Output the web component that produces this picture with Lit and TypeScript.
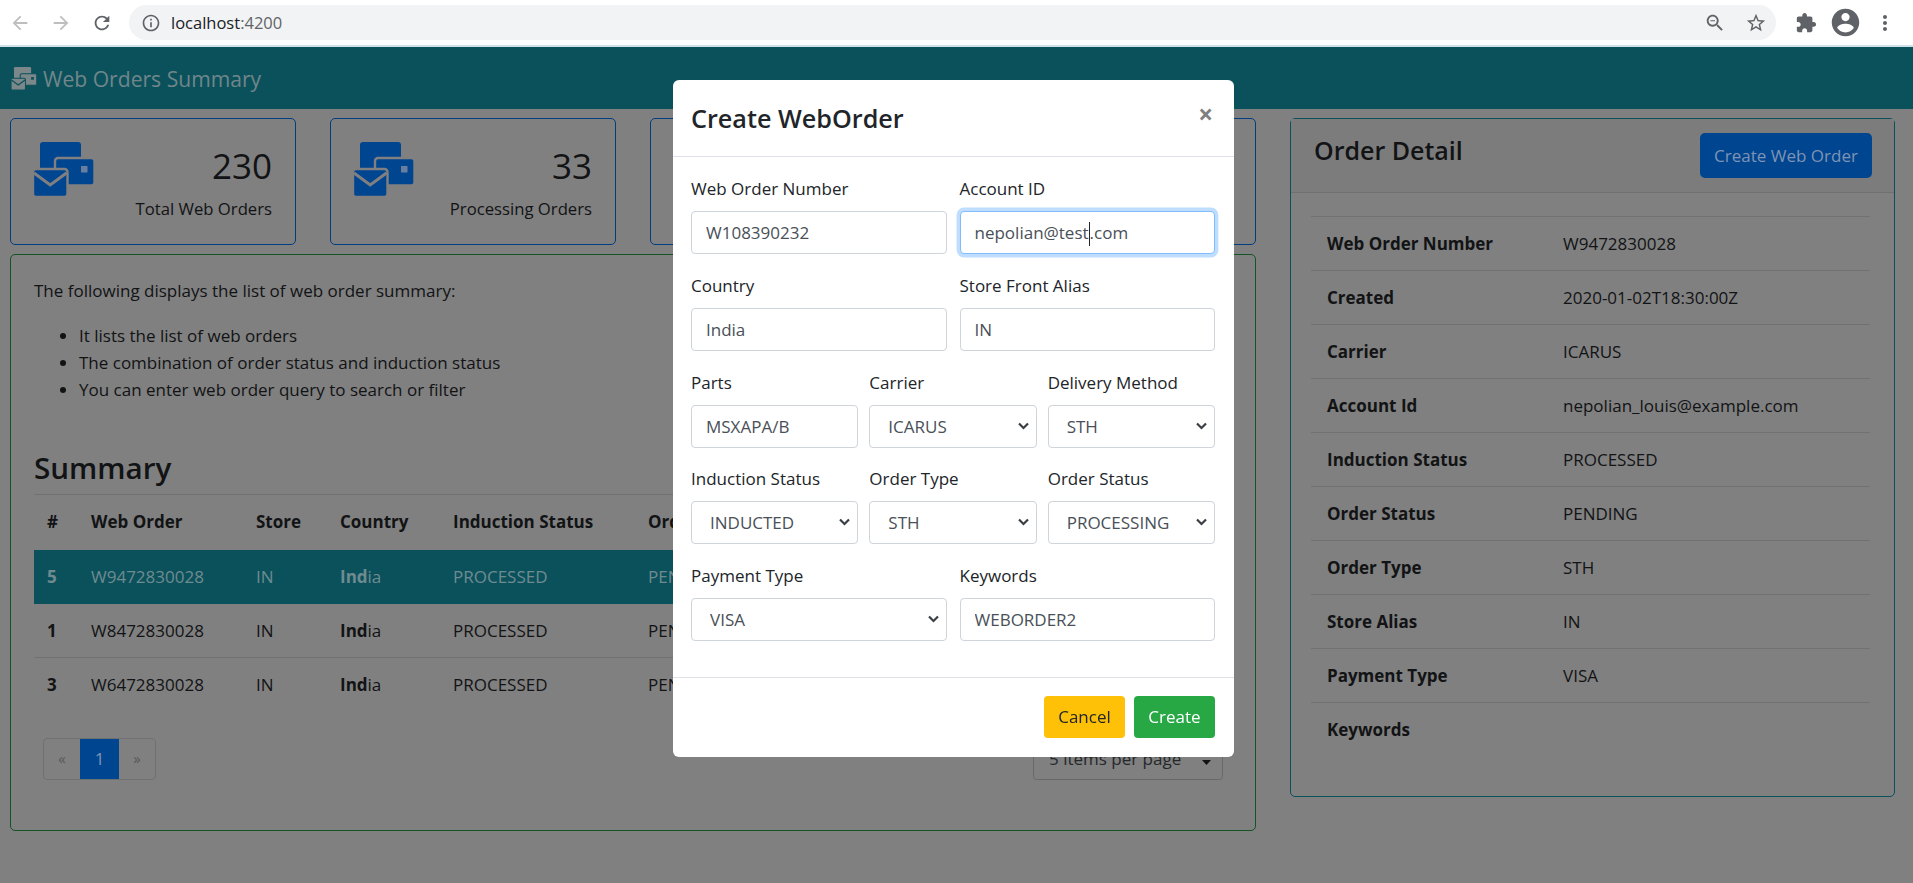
import { LitElement, css, html, svg } from "lit";
import { customElement } from "lit/decorators.js";

const logo = (cls: string) => html`
<svg class=${cls} viewBox="0 0 62 55">
    <rect class="fg" x="7" y="0" width="41" height="31" rx="3"></rect>
    <rect class="fg halo" x="22" y="16" width="39.5" height="27.5" rx="3"></rect>
    <rect class="dot" x="48" y="24" width="6.5" height="6.5"></rect>
    <rect class="fg halo" x="0" y="27" width="34.5" height="28" rx="3"></rect>
    <polyline class="flap" points="1,31 17.2,43 33.5,31"></polyline>
</svg>`;

const icon = (d: string, size: number, fill: string) => html`
<svg width=${size} height=${size} viewBox="0 0 24 24" style="fill:${fill};flex:none;display:block">${svg`<path d=${d}></path>`}</svg>`;

const ICONS = {
    back: "M20 11H7.83l5.59-5.59L12 4l-8 8 8 8 1.41-1.41L7.83 13H20v-2z",
    forward: "M12 4l-1.41 1.41L16.17 11H4v2h12.17l-5.58 5.59L12 20l8-8z",
    reload: "M17.65 6.35C16.2 4.9 14.21 4 12 4c-4.42 0-7.99 3.58-7.99 8s3.57 8 7.99 8c3.73 0 6.84-2.55 7.73-6h-2.08c-.82 2.33-3.04 4-5.65 4-3.31 0-6-2.69-6-6s2.69-6 6-6c1.66 0 3.14.69 4.22 1.78L13 11h7V4l-2.35 2.35z",
    info: "M11 7h2v2h-2zm0 4h2v6h-2zm1-9C6.48 2 2 6.48 2 12s4.48 10 10 10 10-4.48 10-10S17.52 2 12 2zm0 18c-4.41 0-8-3.59-8-8s3.59-8 8-8 8 3.59 8 8-3.59 8-8 8z",
    zoom: "M15.5 14h-.79l-.28-.27C15.41 12.59 16 11.11 16 9.5 16 5.91 13.09 3 9.5 3S3 5.91 3 9.5 5.91 16 9.5 16c1.61 0 3.09-.59 4.23-1.57l.27.28v.79l5 4.99L20.49 19l-4.99-5zm-6 0C7.01 14 5 11.99 5 9.5S7.01 5 9.5 5 14 7.01 14 9.5 11.99 14 9.5 14zM7 9h5v1H7z",
    star: "M22 9.24l-7.19-.62L12 2 9.19 8.63 2 9.24l5.46 4.73L5.82 21 12 17.27 18.18 21l-1.63-7.03L22 9.24zM12 15.4l-3.76 2.27 1-4.28-3.32-2.88 4.38-.38L12 6.1l1.71 4.04 4.38.38-3.32 2.88 1 4.28L12 15.4z",
    ext: "M20.5 11H19V7c0-1.1-.9-2-2-2h-4V3.5C13 2.12 11.88 1 10.5 1S8 2.12 8 3.5V5H4c-1.1 0-1.99.9-1.99 2v3.8H3.5c1.49 0 2.7 1.21 2.7 2.7s-1.21 2.7-2.7 2.7H2V20c0 1.1.9 2 2 2h3.8v-1.5c0-1.49 1.21-2.7 2.7-2.7 1.49 0 2.7 1.21 2.7 2.7V22H17c1.1 0 2-.9 2-2v-4h1.5c1.38 0 2.5-1.12 2.5-2.5S21.88 11 20.5 11z",
    account: "M12 2C6.48 2 2 6.48 2 12s4.48 10 10 10 10-4.48 10-10S17.52 2 12 2zm0 3c1.66 0 3 1.34 3 3s-1.34 3-3 3-3-1.34-3-3 1.34-3 3-3zm0 14.2c-2.5 0-4.71-1.28-6-3.22.03-1.99 4-3.08 6-3.08 1.99 0 5.97 1.09 6 3.08-1.29 1.94-3.5 3.22-6 3.22z",
    menu: "M12 8c1.1 0 2-.9 2-2s-.9-2-2-2-2 .9-2 2 .9 2 2 2zm0 2c-1.1 0-2 .9-2 2s.9 2 2 2 2-.9 2-2-.9-2-2-2zm0 6c-1.1 0-2 .9-2 2s.9 2 2 2 2-.9 2-2-.9-2-2-2z",
};

// cards 3 and 4 sit behind the dialog, only their borders show
const stats = [
    { value: "230", label: "Total Web Orders" },
    { value: "33", label: "Processing Orders" },
    { value: "", label: "" },
    { value: "", label: "" },
];

const orders = [
    { id: 5, no: "W9472830028", active: true },
    { id: 1, no: "W8472830028", active: false },
    { id: 3, no: "W6472830028", active: false },
];

const details = [
    ["Web Order Number", "W9472830028"],
    ["Created", "2020-01-02T18:30:00Z"],
    ["Carrier", "ICARUS"],
    ["Account Id", "nepolian_louis@example.com"],
    ["Induction Status", "PROCESSED"],
    ["Order Status", "PENDING"],
    ["Order Type", "STH"],
    ["Store Alias", "IN"],
    ["Payment Type", "VISA"],
    ["Keywords", ""],
];

@customElement("app-root")
export class AppRoot extends LitElement {
    static styles = css`
    :host {
        display: block;
        height: 883px;
        overflow: hidden;
        font-family: "Open Sans", "Noto Sans", sans-serif;
        font-size: 17px;
        line-height: 27px;
        color: #121315;
        background: #808080;
    }

    * { box-sizing: border-box; }

    .chrome {
        height: 47px;
        display: flex;
        align-items: center;
        padding: 0 16px 0 9px;
        background: #fff;
        border-bottom: 2px solid #cfe2ea;
    }
    .chrome .nav-gap { margin-left: 19px; }
    .chrome .reload { margin-right: 16px; }
    .omni {
        width: 1648px;
        height: 35px;
        display: flex;
        align-items: center;
        padding: 0 9px 0 12px;
        border-radius: 18px;
        background: #f1f3f4;
        font-size: 16.5px;
        color: #202124;
    }
    .omni .url { margin-left: 10px; margin-right: auto; }
    .omni .port { color: #5f6368; }
    .omni .gap { margin-left: 19px; }
    .ext { margin-left: 19px; }
    .account { margin-left: 12px; }
    .dots { margin-left: 11px; }

    .brand {
        height: 62px;
        display: flex;
        align-items: center;
        gap: 6px;
        padding-left: 11px;
        background: #0b515c;
        color: #70868a;
        font-size: 21.1px;
    }
    .brand-logo { width: 26px; height: 23px; --fg: #7b8788; --halo: #0b515c; --dot: #0b515c; }

    .main {
        display: flex;
        gap: 34px;
        padding: 9px 18px 0 10px;
    }
    .left { width: 1246px; flex: none; }
    .right { flex: 1; }

    .stats {
        display: grid;
        grid-template-columns: repeat(4, 286px);
        gap: 34px;
        margin-bottom: 9px;
    }
    .stat {
        height: 127px;
        display: flex;
        justify-content: space-between;
        padding: 23px 23px 0 22px;
        border: 1px solid #003e80;
        border-radius: 5px;
    }
    .stat-logo { width: 62px; height: 55px; --fg: #004590; --halo: #808080; --dot: #6a7f9f; }
    .stat-text { text-align: right; }
    .stat-value { font-size: 35px; line-height: 47px; }
    .stat-label { margin-top: 6px; font-size: 16.7px; line-height: 27px; }

    .panel {
        height: 577px;
        padding: 22px 24px 0 23px;
        border: 1px solid #145324;
        border-radius: 5px;
    }
    .panel p { margin: 0 0 18px; }
    .panel ul { margin: 0 0 46px; padding-left: 45px; }
    .panel h3 {
        margin: 0 0 7px;
        font-size: 29.6px;
        line-height: 38px;
        font-weight: 600;
    }

    .orders {
        width: 100%;
        border-collapse: collapse;
        table-layout: fixed;
    }
    .orders th, .orders td {
        height: 54px;
        padding: 0 13px;
        text-align: left;
        white-space: nowrap;
        overflow: hidden;
    }
    .orders th {
        height: 55px;
        padding-bottom: 2px;
        font-weight: 700;
        border-top: 1px solid #6f7173;
    }
    .orders td { border-bottom: 1px solid #6f7173; }
    .orders tr:last-child td { border-bottom: 0; }
    .orders .num, .orders b { font-weight: 700; }
    .orders .active td { background: #0b515c; color: #6f8b90; border-bottom: 0; }
    .c-id { width: 44px; }
    .c-order { width: 165px; }
    .c-store { width: 84px; }
    .c-country { width: 113px; }
    .c-induction { width: 195px; }

    .pager-row {
        display: flex;
        justify-content: space-between;
        margin-top: 26px;
        padding: 0 8px 0 9px;
    }
    .pager {
        height: 42px;
        display: flex;
        border: 1px solid #6f7173;
        border-radius: 4px;
        overflow: hidden;
    }
    .pager span {
        display: flex;
        align-items: center;
        justify-content: center;
        width: 36px;
        color: #55595c;
        font-size: 15px;
    }
    .pager .current { width: 39px; background: #004590; color: #7f94b4; font-size: 17px; }
    .per-page {
        width: 190px;
        height: 42px;
        display: flex;
        align-items: center;
        justify-content: space-between;
        padding: 0 11px 0 15px;
        border: 1px solid #676a6d;
        border-radius: 4px;
        color: #25282b;
    }
    .updown { width: 9px; height: 13px; fill: #121315; }

    .detail {
        height: 679px;
        border: 1px solid #0b515c;
        border-radius: 5px;
    }
    .detail-head {
        height: 74px;
        display: flex;
        align-items: flex-start;
        justify-content: space-between;
        padding: 14px 22px 0 23px;
        background: #7c7c7c;
        border-bottom: 1px solid #707070;
    }
    .detail-head h4 {
        margin: 0;
        font-size: 25px;
        line-height: 34px;
        font-weight: 600;
    }
    .primary {
        height: 45px;
        width: 172px;
        display: flex;
        align-items: center;
        justify-content: center;
        background: #004590;
        color: #7f94b4;
        border-radius: 5px;
    }
    .detail-body { padding: 23px 24px 0 20px; }
    .info { width: 100%; border-collapse: collapse; }
    .info th, .info td {
        height: 54px;
        padding: 0;
        text-align: left;
        border-top: 1px solid #6f7173;
    }
    .info th { width: 252px; padding-left: 16px; font-weight: 700; }

    .modal {
        position: fixed;
        left: 673px;
        top: 80px;
        width: 561px;
        height: 677px;
        background: #fff;
        color: #212529;
        border-radius: 6px;
        display: flex;
        flex-direction: column;
    }
    .modal-head {
        height: 77px;
        display: flex;
        align-items: center;
        justify-content: space-between;
        padding: 0 21px 0 18px;
        border-bottom: 1px solid #dee2e6;
    }
    .modal-head h5 { margin: 0; font-size: 25.2px; font-weight: 600; line-height: 38px; }
    .close { font-size: 26px; font-weight: 700; color: #808080; margin-bottom: 8px; line-height: 26px; }
    .modal-body { flex: 1; padding: 18px 19px 0 18px; }
    .row { display: grid; gap: 13px; margin-bottom: 17.75px; }
    .row.two { grid-template-columns: 1fr 1fr; }
    .row.three { grid-template-columns: repeat(3, 1fr); gap: 11px; }
    label { display: block; margin-bottom: 9px; white-space: nowrap; }
    .control {
        width: 100%;
        height: 43px;
        display: block;
        padding: 0 14px;
        border: 1px solid #ced4da;
        border-radius: 4px;
        background: #fff;
        font: inherit;
        line-height: 41px;
        color: #495057;
        outline: none;
    }
    .control.focus {
        border-color: #80bdff;
        box-shadow: 0 0 0 3.4px rgba(0, 123, 255, .25);
    }
    .caret {
        display: inline-block;
        width: 0;
        height: 24px;
        vertical-align: middle;
        border-left: 1px solid #212529;
    }
    .select-wrap { position: relative; }
    select.control { appearance: none; padding-left: 18px; }
    .chev {
        position: absolute;
        right: 8px;
        top: 16px;
        width: 11px;
        height: 10px;
        fill: none;
        stroke: #3a3f44;
        stroke-width: 2.2;
        pointer-events: none;
    }
    .modal-foot {
        height: 80px;
        display: flex;
        align-items: center;
        justify-content: flex-end;
        gap: 9px;
        padding: 0 19px 2px;
        border-top: 1px solid #dee2e6;
    }
    .btn {
        width: 81px;
        height: 42px;
        display: flex;
        align-items: center;
        justify-content: center;
        border-radius: 4px;
    }
    .btn.cancel { background: #ffc107; color: #212529; }
    .btn.create { background: #28a745; color: #fff; }

    .fg { fill: var(--fg); }
    .halo { stroke: var(--halo); stroke-width: 2.4; }
    .dot { fill: var(--dot); }
    .flap { fill: none; stroke: var(--halo); stroke-width: 3; }
    `;

    field(name: string, value: string) {
        return html`<div>
            <label>${name}</label>
            <input class="control" .value=${value}>
        </div>`;
    }

    choice(name: string, value: string) {
        return html`<div>
            <label>${name}</label>
            <div class="select-wrap">
                <select class="control"><option>${value}</option></select>
                <svg class="chev" viewBox="0 0 11 10"><polyline points="1,2.5 5.5,7 10,2.5"></polyline></svg>
            </div>
        </div>`;
    }

    renderChrome() {
        return html`
        <div class="chrome">
            ${icon(ICONS.back, 22, "#bcbec0")}
            <span class="nav-gap">${icon(ICONS.forward, 22, "#bcbec0")}</span>
            <span class="nav-gap reload">${icon(ICONS.reload, 22, "#5f6368")}</span>
            <div class="omni">
                ${icon(ICONS.info, 20, "#5f6368")}
                <span class="url">localhost<span class="port">:4200</span></span>
                ${icon(ICONS.zoom, 22, "#5f6368")}
                <span class="gap">${icon(ICONS.star, 22, "#5f6368")}</span>
            </div>
            <span class="ext">${icon(ICONS.ext, 22, "#5f6368")}</span>
            <span class="account">${icon(ICONS.account, 33, "#5f6368")}</span>
            <span class="dots">${icon(ICONS.menu, 24, "#5f6368")}</span>
        </div>`;
    }

    renderOrders() {
        return html`
        <table class="orders">
            <colgroup>
                <col class="c-id"><col class="c-order"><col class="c-store"><col class="c-country"><col class="c-induction"><col>
            </colgroup>
            <tr>
                <th>#</th><th>Web Order</th><th>Store</th><th>Country</th><th>Induction Status</th><th>Order Status</th>
            </tr>
            ${orders.map(o => html`
            <tr class=${o.active ? "active" : ""}>
                <td class="num">${o.id}</td>
                <td>${o.no}</td>
                <td>IN</td>
                <td><b>Ind</b>ia</td>
                <td>PROCESSED</td>
                <td>PENDING</td>
            </tr>`)}
        </table>`;
    }

    renderModal() {
        return html`
        <div class="modal">
            <div class="modal-head">
                <h5>Create WebOrder</h5>
                <span class="close">×</span>
            </div>
            <div class="modal-body">
                <div class="row two">
                    ${this.field("Web Order Number", "W108390232")}
                    <div>
                        <label>Account ID</label>
                        <div class="control focus">nepolian@test<span class="caret"></span>.com</div>
                    </div>
                </div>
                <div class="row two">
                    ${this.field("Country", "India")}
                    ${this.field("Store Front Alias", "IN")}
                </div>
                <div class="row three">
                    ${this.field("Parts", "MSXAPA/B")}
                    ${this.choice("Carrier", "ICARUS")}
                    ${this.choice("Delivery Method", "STH")}
                </div>
                <div class="row three">
                    ${this.choice("Induction Status", "INDUCTED")}
                    ${this.choice("Order Type", "STH")}
                    ${this.choice("Order Status", "PROCESSING")}
                </div>
                <div class="row two">
                    ${this.choice("Payment Type", "VISA")}
                    ${this.field("Keywords", "WEBORDER2")}
                </div>
            </div>
            <div class="modal-foot">
                <div class="btn cancel">Cancel</div>
                <div class="btn create">Create</div>
            </div>
        </div>`;
    }

    render() {
        return html`
        ${this.renderChrome()}
        <div class="brand">${logo("brand-logo")}<span>Web Orders Summary</span></div>
        <div class="main">
            <div class="left">
                <div class="stats">
                    ${stats.map(s => html`
                    <div class="stat">
                        ${logo("stat-logo")}
                        <div class="stat-text">
                            <div class="stat-value">${s.value}</div>
                            <div class="stat-label">${s.label}</div>
                        </div>
                    </div>`)}
                </div>
                <div class="panel">
                    <p>The following displays the list of web order summary:</p>
                    <ul>
                        <li>It lists the list of web orders</li>
                        <li>The combination of order status and induction status</li>
                        <li>You can enter web order query to search or filter</li>
                    </ul>
                    <h3>Summary</h3>
                    ${this.renderOrders()}
                    <div class="pager-row">
                        <div class="pager"><span>«</span><span class="current">1</span><span>»</span></div>
                        <div class="per-page">5 items per page
                            <svg class="updown" viewBox="0 0 9 13"><path d="M4.5 0L9 5H0zM4.5 13L0 8h9z"></path></svg>
                        </div>
                    </div>
                </div>
            </div>
            <div class="right">
                <div class="detail">
                    <div class="detail-head">
                        <h4>Order Detail</h4>
                        <div class="primary">Create Web Order</div>
                    </div>
                    <div class="detail-body">
                        <table class="info">
                            ${details.map(([k, v]) => html`<tr><th>${k}</th><td>${v}</td></tr>`)}
                        </table>
                    </div>
                </div>
            </div>
        </div>
        ${this.renderModal()}
        `;
    }
}

declare global {
    interface HTMLElementTagNameMap {
        "app-root": AppRoot
    }
}
